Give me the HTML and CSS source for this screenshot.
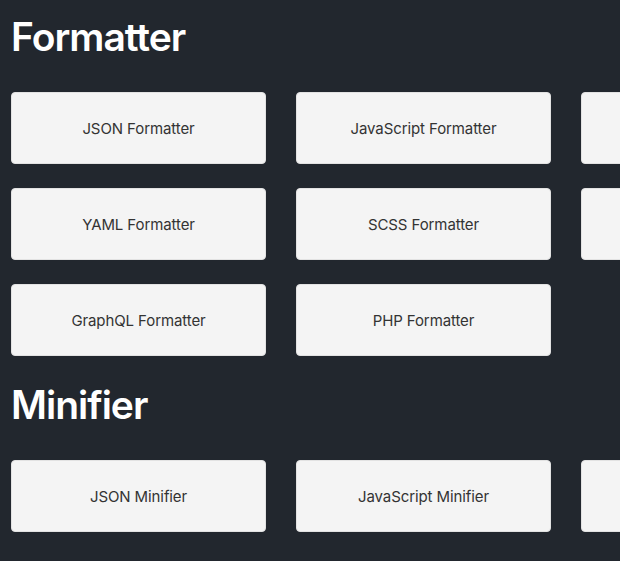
FILE: index.html
```html
<!DOCTYPE html>
<html lang="en">
<head>
<meta charset="utf-8">
<title>Tools</title>
<link rel="stylesheet" href="styles.css">
</head>
<body>
<main class="page">
  <section class="group">
    <h1 class="group-title">Formatter</h1>
    <div class="grid">
      <a class="card">JSON Formatter</a>
      <a class="card">JavaScript Formatter</a>
      <a class="card">HTML Formatter</a>
      <a class="card">YAML Formatter</a>
      <a class="card">SCSS Formatter</a>
      <a class="card">CSS Formatter</a>
      <a class="card">GraphQL Formatter</a>
      <a class="card">PHP Formatter</a>
    </div>
  </section>
  <section class="group">
    <h1 class="group-title">Minifier</h1>
    <div class="grid">
      <a class="card">JSON Minifier</a>
      <a class="card">JavaScript Minifier</a>
      <a class="card">CSS Minifier</a>
    </div>
  </section>
</main>
</body>
</html>
```
FILE: styles.css
```css
html, body {
  margin: 0;
  padding: 0;
  background: #22272e;
  overflow: hidden;
}
body {
  font-family: Inter, "Noto Sans", sans-serif;
}
.page {
  padding: 13px 0 0 11px;
  width: 900px;
}
.group {
  margin-bottom: 25px;
}
.group-title {
  margin: 0 0 31px;
  font-size: 39px;
  line-height: 48px;
  font-weight: 600;
  color: #ffffff;
  letter-spacing: -1px;
}
.grid {
  display: grid;
  grid-template-columns: repeat(3, 255px);
  grid-auto-rows: 72px;
  column-gap: 30px;
  row-gap: 24px;
}
.card {
  display: flex;
  align-items: center;
  justify-content: center;
  background: #f4f4f4;
  border: 1px solid #e2e2e2;
  border-radius: 4px;
  color: #333333;
  font-size: 15px;
  letter-spacing: -0.1px;
  text-decoration: none;
}
```
